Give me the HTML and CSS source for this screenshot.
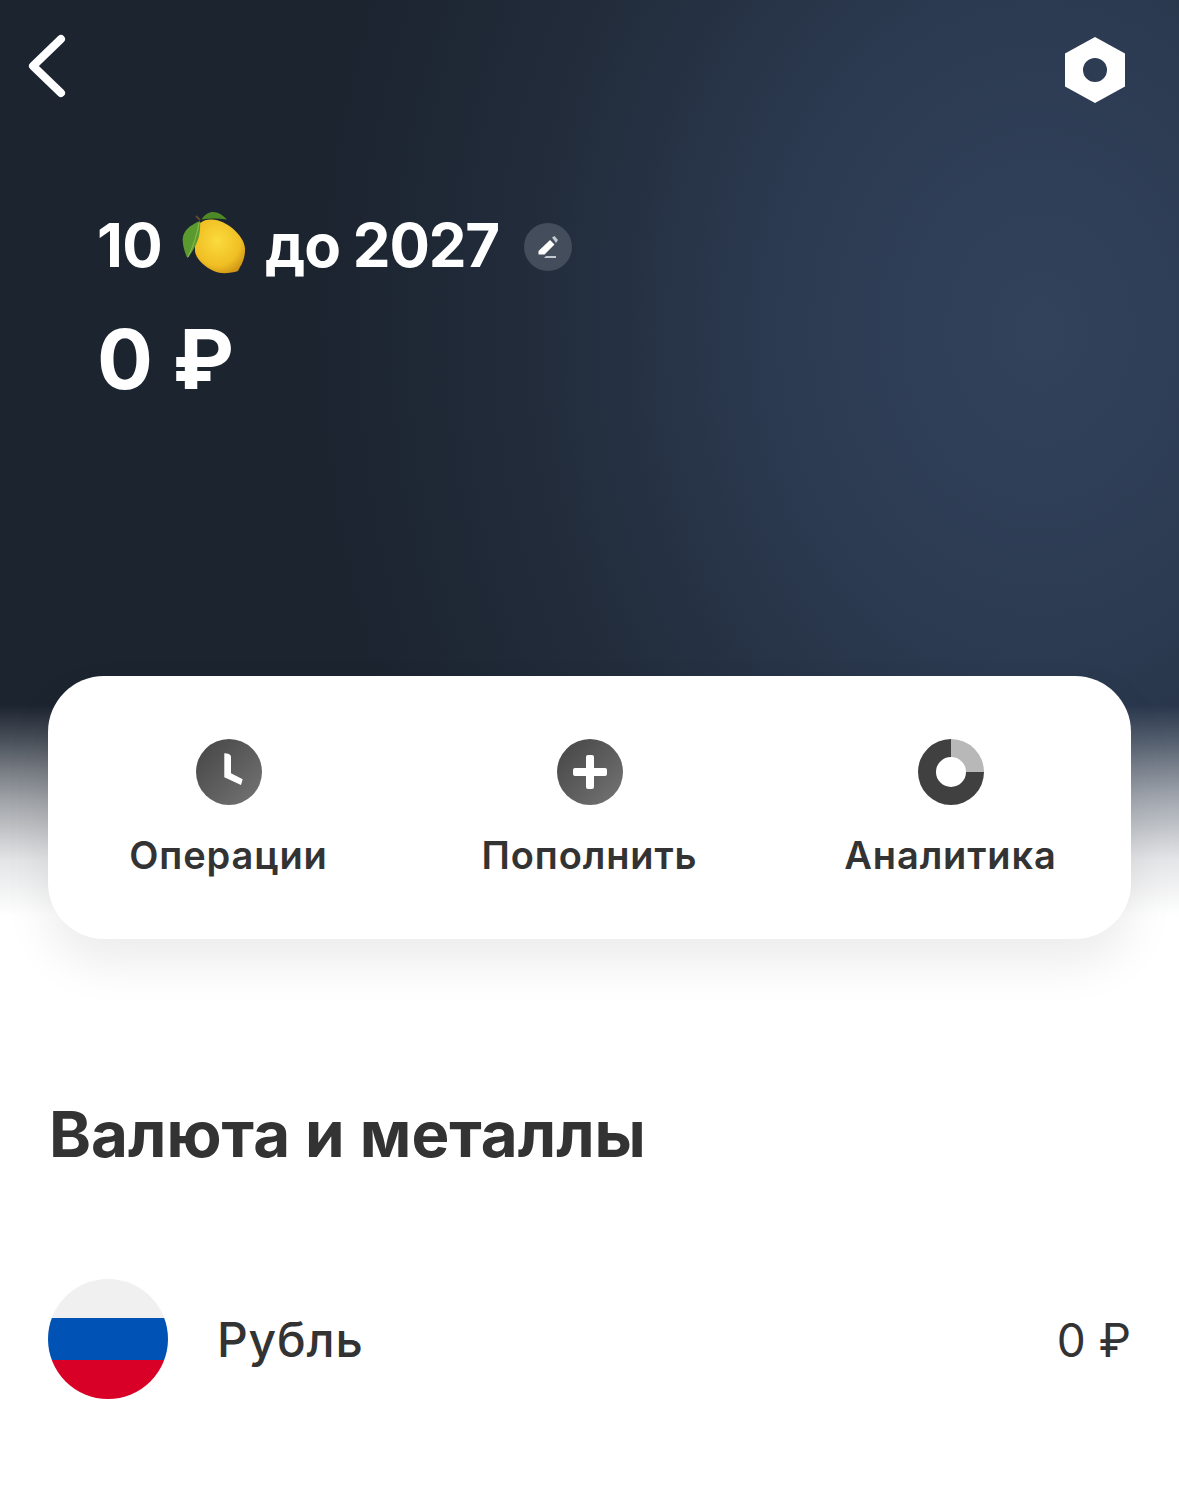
FILE: index.html
```html
<!DOCTYPE html>
<html lang="ru">
<head>
  <meta charset="UTF-8">
  <meta name="viewport" content="width=device-width, initial-scale=1.0">
  <title>10 лимонов до 2027</title>
  <link rel="stylesheet" href="styles.css">
</head>
<body>
  <div class="hero">
    <div class="topbar">
      <svg class="back" width="40" height="64" viewBox="0 0 40 64">
        <path d="M33 5 L5 32 L33 59" fill="none" stroke="#fff" stroke-width="8" stroke-linecap="round" stroke-linejoin="round"/>
      </svg>
      <svg class="settings" width="60" height="66" viewBox="0 0 60 66">
        <path fill="#fff" fill-rule="evenodd" d="M30 0 L60 16.500 L60 49.500 L30 66 L0 49.500 L0 16.500 Z M30 21 A12 12 0 1 0 30 45 A12 12 0 1 0 30 21 Z"/>
      </svg>
    </div>

    <div class="goal">
      <h1 class="goal-title">
        <span>10</span>
        <svg class="lemon" width="66" height="64" viewBox="0 0 66 64">
          <defs>
            <radialGradient id="lemonFill" cx="0.45" cy="0.4" r="0.7">
              <stop offset="0" stop-color="#fbdb3e"/>
              <stop offset="0.65" stop-color="#f0bf24"/>
              <stop offset="1" stop-color="#c98c12"/>
            </radialGradient>
          </defs>
          <path fill="url(#lemonFill)" d="M20 12 C24 9 28 8 32 8.500 C46 9 64 24 65 37 C65.500 44 63 52 60 56 L58 60 C52 62 44 63 38 61.500 C26 58 14 47 15 38 C15 28 17 18 20 12 Z"/>
          <path fill="#4d8a26" d="M21.500 8.500 C25 3 29 1 33 1 C38 1 43 4 47 8.500 C38 7 30 7 21.500 8.500 Z"/>
          <path fill="#5a9a2e" d="M20 10 C10 14 3 20 2.700 28 C2.500 35 5 42 7.300 47 C12 42 17 33 19 25 C20 20 20.500 15 20 10 Z"/>
          <path fill="none" stroke="#8cbf52" stroke-width="1" d="M19 12 C17 24 13 36 8 46"/>
          <path fill="none" stroke="#5d4a35" stroke-width="2" d="M20 9 L16 5"/>
        </svg>
        <span class="goal-date">до 2027</span>
        <span class="edit">
          <svg width="26" height="26" viewBox="0 0 26 26">
            <path fill="#fff" d="M15 6 L19.500 10.500 L9.500 20.500 L3.500 20.500 L3.500 17 Z"/>
            <path fill="#c4c8cf" d="M17 3.500 L19.500 2 L23 6 L21 9 Z"/>
            <path fill="#c4c8cf" d="M11 22 L21 22 L21 24 L9 24 Z"/>
          </svg>
        </span>
      </h1>
      <div class="goal-amount">0 ₽</div>
    </div>

    <div class="actions">
      <div class="action">
        <svg width="66" height="66" viewBox="0 0 66 66">
          <defs>
            <linearGradient id="iconFill" x1="0" y1="0" x2="1" y2="1">
              <stop offset="0" stop-color="#444"/>
              <stop offset="1" stop-color="#757575"/>
            </linearGradient>
          </defs>
          <circle cx="33" cy="33" r="33" fill="url(#iconFill)"/>
          <path fill="#fff" d="M28.300 14.300 L31 14.500 Q35 15 35 18 L35 34.300 L46.700 40.300 L45 46 L28.300 38.300 Z"/>
        </svg>
        <span>Операции</span>
      </div>
      <div class="action">
        <svg width="66" height="66" viewBox="0 0 66 66">
          <circle cx="33" cy="33" r="33" fill="url(#iconFill)"/>
          <path fill="#fff" d="M29 18 Q29 16 31 16 L35 16 Q37 16 37 18 L37 29 L48 29 Q50 29 50 31 L50 35 Q50 37 48 37 L37 37 L37 48 Q37 50 35 50 L31 50 Q29 50 29 48 L29 37 L18 37 Q16 37 16 35 L16 31 Q16 29 18 29 L29 29 Z"/>
        </svg>
        <span>Пополнить</span>
      </div>
      <div class="action">
        <svg width="66" height="66" viewBox="0 0 66 66">
          <path fill="#404040" d="M33 0 A33 33 0 1 0 66 33 L48 33 A15 15 0 1 1 33 18 Z"/>
          <path fill="#b8b8b8" d="M33 0 A33 33 0 0 1 66 33 L48 33 A15 15 0 0 0 33 18 Z"/>
        </svg>
        <span>Аналитика</span>
      </div>
    </div>
  </div>

  <section class="accounts">
    <h2>Валюта и металлы</h2>
    <div class="account">
      <svg width="120" height="120" viewBox="0 0 120 120">
        <defs>
          <clipPath id="flagClip"><circle cx="60" cy="60" r="60"/></clipPath>
        </defs>
        <g clip-path="url(#flagClip)">
          <rect width="120" height="39" fill="#f0f0f0"/>
          <rect y="39" width="120" height="42" fill="#0052b4"/>
          <rect y="81" width="120" height="39" fill="#d80027"/>
        </g>
      </svg>
      <span class="account-name">Рубль</span>
      <span class="account-sum">0 ₽</span>
    </div>
  </section>
</body>
</html>
```

FILE: styles.css
```css
* {
  box-sizing: border-box;
}

body {
  margin: 0;
  font-family: 'Inter', 'Roboto', sans-serif;
  background-color: white;
  color: #333;
}

.hero {
  height: 939px;
  padding: 33px 48px 0;
  display: flex;
  flex-direction: column;
  background:
    linear-gradient(to bottom, rgba(255, 255, 255, 0) 705px, rgba(255, 255, 255, 0.2) 740px, rgba(255, 255, 255, 0.4) 770px, rgba(255, 255, 255, 0.58) 800px, rgba(255, 255, 255, 0.88) 860px, white 915px),
    radial-gradient(ellipse 720px 900px at 1040px 330px, #32425b 0%, #2c3b52 35%, #222c3b 70%, #1c2430 100%);
}

.topbar {
  display: flex;
  justify-content: space-between;
  margin: 1px 6px 0 -20px;
}

.settings {
  margin-top: 3px;
}

.goal {
  margin: 106px 0 0 49px;
  color: white;
  height: 467px;
}

.goal-title {
  margin: 0;
  display: flex;
  align-items: center;
  height: 72px;
  font-size: 60px;
  font-weight: 700;
  letter-spacing: -0.5px;
}

.goal-date {
  letter-spacing: -1.2px;
}

.lemon {
  margin: -4px 19px 0 18px;
}

.edit {
  width: 48px;
  height: 48px;
  margin: 4px 0 0 25px;
  border-radius: 50%;
  background-color: #444d5c;
  display: flex;
  align-items: center;
  justify-content: center;
}

.goal-amount {
  margin-top: 35px;
  font-size: 83px;
  font-weight: 700;
  line-height: 86px;
}

.actions {
  height: 263px;
  padding: 63px 0 0;
  background-color: white;
  border-radius: 56px;
  display: grid;
  grid-template-columns: repeat(3, 1fr);
  box-shadow: 0 24px 48px rgba(0, 0, 0, 0.08);
}

.action {
  display: flex;
  flex-direction: column;
  align-items: center;
  gap: 27px;
  font-size: 38px;
  font-weight: 600;
  line-height: 46px;
  letter-spacing: 0.9px;
}

.accounts {
  padding: 0 48px;
}

.accounts h2 {
  margin: 158px 0 0 1px;
  font-size: 63.6px;
  font-weight: 700;
  line-height: 74px;
}

.account {
  margin-top: 108px;
  display: flex;
  align-items: center;
  font-size: 46px;
}

.account-name {
  margin-left: 49px;
  font-size: 48px;
  font-weight: 500;
  letter-spacing: 0.8px;
}

.account-sum {
  margin: 2px 0 0 auto;
}
```
